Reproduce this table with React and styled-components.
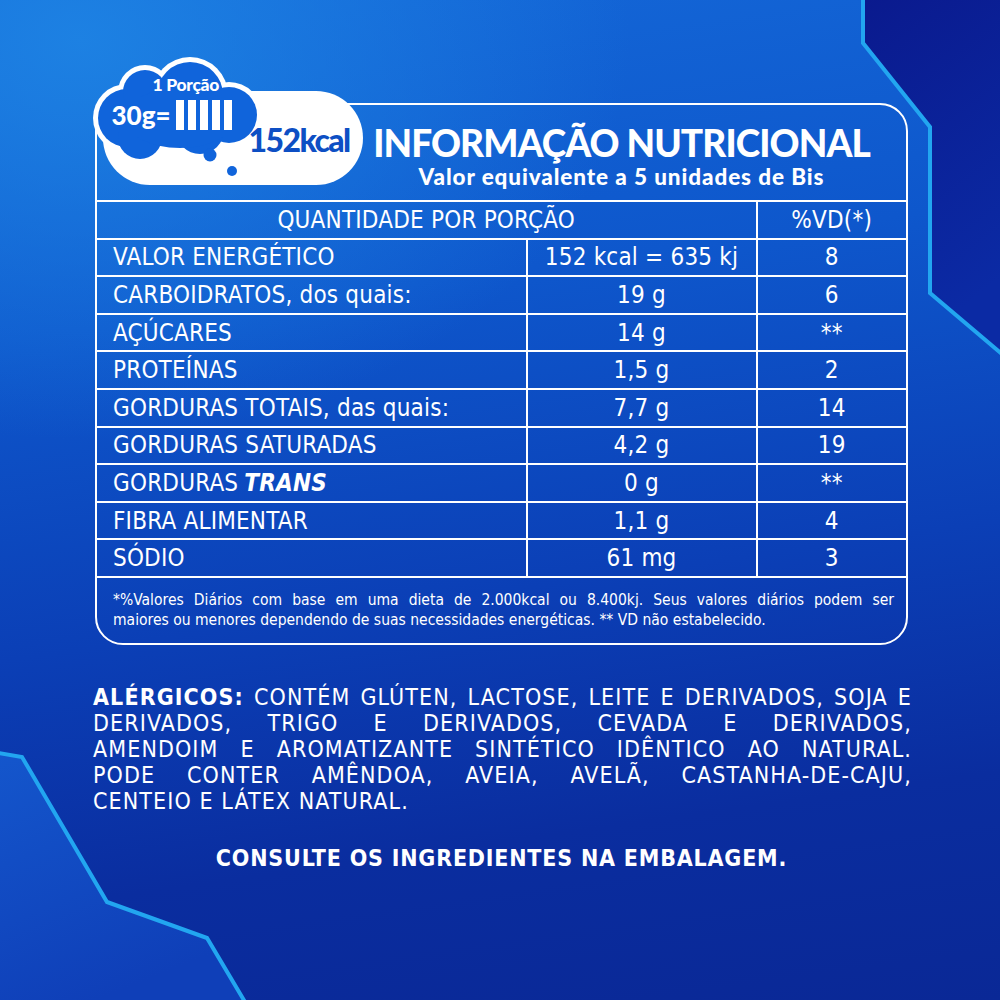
import React from 'react';
import styled, { createGlobalStyle } from 'styled-components';

const GlobalStyle = createGlobalStyle`
  html, body { margin: 0; padding: 0; }
  body { background: #0b3db3; }
`;

const NARROW = `"Liberation Sans Narrow", "DejaVu Sans Condensed", "Roboto", sans-serif`;
const ROUND = `"Lato", "Open Sans", sans-serif`;

const Page = styled.div`
  position: relative;
  width: 1000px;
  height: 1000px;
  overflow: hidden;
  background:
    radial-gradient(ellipse 55% 40% at 8% 4%, rgba(30, 132, 228, 0.9) 0%, rgba(30, 132, 228, 0) 100%),
    linear-gradient(172deg, #1468d8 0%, #0e57cc 30%, #0b3fb6 58%, #0a2d9f 80%, #0a2896 100%);
`;

const Backdrop = styled.svg`
  position: absolute;
  inset: 0;
  width: 1000px;
  height: 1000px;
`;

const Content = styled.div`
  position: relative;
  padding: 103px 92px 0 95px;
`;

const Panel = styled.div`
  position: relative;
  width: 813px;
  box-sizing: border-box;
  border: 2.5px solid #fff;
  border-radius: 28px;
  color: #fff;
`;

const Header = styled.div`
  display: flex;
  flex-direction: column;
  align-items: center;
  padding: 18px 40px 10px 280px;
  height: 95px;
  box-sizing: border-box;
`;

const Title = styled.div`
  font-family: ${ROUND};
  font-weight: 900;
  font-size: 37px;
  line-height: 40px;
  letter-spacing: -0.9px;
  white-space: nowrap;
`;

const Subtitle = styled.div`
  margin-top: 2px;
  font-family: ${ROUND};
  font-weight: 900;
  font-size: 22.5px;
  line-height: 24px;
  letter-spacing: 0.9px;
  white-space: nowrap;
`;

const Row = styled.div`
  display: grid;
  grid-template-columns: ${p => (p.$head ? '658.5px 1fr' : '428.5px 230px 1fr')};
  height: 37.6px;
  box-sizing: border-box;
  border-top: 2px solid #fff;
`;

const Cell = styled.div`
  display: flex;
  align-items: center;
  justify-content: ${p => (p.$left ? 'flex-start' : 'center')};
  padding-left: ${p => (p.$left ? '16px' : '0')};
  border-left: ${p => (p.$first ? 'none' : '2px solid #fff')};
  font-family: ${NARROW};
  font-size: 24px;
  letter-spacing: 0.2px;
  line-height: 1;
  white-space: nowrap;
`;

const Trans = styled.b`
  font-style: italic;
  font-weight: 700;
  margin-left: 6px;
`;

const Note = styled.div`
  border-top: 2px solid #fff;
  padding: 12px 12px 13px 16px;
  font-family: ${NARROW};
  font-size: 15.5px;
  line-height: 20px;
`;

const JustLine = styled.div`
  text-align: ${p => (p.$last ? 'left' : 'justify')};
  text-align-last: ${p => (p.$last ? 'left' : 'justify')};
`;

const Badge = styled.div`
  position: absolute;
  top: -51.5px;
  left: -7.5px;
  width: 280px;
  height: 135px;
`;

const BadgeArt = styled.svg`
  position: absolute;
  inset: 0;
`;

const Portion = styled.span`
  position: absolute;
  left: 63px;
  top: 20px;
  font-family: ${ROUND};
  font-weight: 900;
  font-size: 17.5px;
  line-height: 22px;
  color: #fff;
  letter-spacing: -0.3px;
`;

const Grams = styled.div`
  position: absolute;
  left: 22px;
  top: 46px;
  display: flex;
  align-items: center;
  gap: 5px;
  height: 30px;
  font-family: ${ROUND};
  font-weight: 900;
  font-size: 26px;
  color: #fff;
`;

const Bars = styled.div`
  display: flex;
  gap: 3.5px;
  height: 30px;
`;

const Bar = styled.i`
  display: block;
  width: 8.5px;
  background: #fff;
`;

const Kcal = styled.span`
  position: absolute;
  left: 159px;
  top: 66px;
  font-family: ${ROUND};
  font-weight: 900;
  font-size: 32px;
  line-height: 40px;
  letter-spacing: -1.6px;
  color: #0d4fc4;
`;

const Allergens = styled.div`
  margin: 39px 0 0 -2px;
  width: 819px;
  color: #fff;
  font-family: ${NARROW};
  font-size: 23px;
  line-height: 26px;
  letter-spacing: 1.1px;
`;

const Consult = styled.div`
  margin-top: 31px;
  text-align: center;
  color: #fff;
  font-family: ${NARROW};
  font-weight: 700;
  font-size: 23px;
  line-height: 26px;
  letter-spacing: 0.8px;
`;

const rows = [
  ['VALOR ENERGÉTICO', '152 kcal = 635 kj', '8'],
  ['CARBOIDRATOS, dos quais:', '19 g', '6'],
  ['AÇÚCARES', '14 g', '**'],
  ['PROTEÍNAS', '1,5 g', '2'],
  ['GORDURAS TOTAIS, das quais:', '7,7 g', '14'],
  ['GORDURAS SATURADAS', '4,2 g', '19'],
  ['TRANS', '0 g', '**'],
  ['FIBRA ALIMENTAR', '1,1 g', '4'],
  ['SÓDIO', '61 mg', '3'],
];

// blue cloud bumps: cx, cy, r
const bumps = [
  [37, 64, 29],
  [55, 38, 22],
  [100, 41, 33],
  [139, 61, 28],
  [50, 83, 22],
  [110, 76, 24],
];

function Cloud() {
  const blue = '#1064db';
  return (
    <Badge>
      <BadgeArt width="280" height="135" viewBox="0 0 280 135">
        <rect x="13" y="37" width="260" height="94" rx="47" fill="#fff" />
        {bumps.map(([x, y, r], i) => <circle key={'w' + i} cx={x} cy={y} r={r + 5} fill="#fff" />)}
        <ellipse cx="90" cy="64" rx="60" ry="35" fill="#fff" />
        {bumps.map(([x, y, r], i) => <circle key={'b' + i} cx={x} cy={y} r={r} fill={blue} />)}
        <ellipse cx="90" cy="64" rx="55" ry="30" fill={blue} />
        <circle cx="120" cy="101" r="6.5" fill={blue} />
        <circle cx="142" cy="117" r="5" fill={blue} />
      </BadgeArt>
      <Portion>1 Porção</Portion>
      <Grams>
        30g=
        <Bars>
          {[0, 1, 2, 3, 4].map(i => <Bar key={i} />)}
        </Bars>
      </Grams>
      <Kcal>152kcal</Kcal>
    </Badge>
  );
}

export default function App() {
  return (
    <Page>
      <GlobalStyle />
      <Backdrop viewBox="0 0 1000 1000">
        <defs>
          <linearGradient id="navy" x1="0" y1="0" x2="0.3" y2="1">
            <stop offset="0" stopColor="#0a1a8e" />
            <stop offset="1" stopColor="#0b2aa4" />
          </linearGradient>
          <linearGradient id="lite" x1="0" y1="0" x2="0.4" y2="1">
            <stop offset="0" stopColor="#1456cc" />
            <stop offset="1" stopColor="#0f3fb8" />
          </linearGradient>
        </defs>
        <polygon points="863,0 1000,0 1000,353 930,293 930,127 863,43" fill="url(#navy)" />
        <polygon points="0,753 22,757 107,902 207,938 243,1000 0,1000" fill="url(#lite)" />
        <polyline points="863,-2 863,43 930,127 930,293 1002,354" fill="none" stroke="#22a6f0" strokeWidth="4" />
        <polyline points="-2,753 22,757 107,902 207,938 245,1002" fill="none" stroke="#22a6f0" strokeWidth="4" />
      </Backdrop>
      <Content>
        <Panel>
          <Cloud />
          <Header>
            <Title>INFORMAÇÃO NUTRICIONAL</Title>
            <Subtitle>Valor equivalente a 5 unidades de Bis</Subtitle>
          </Header>
          <Row $head>
            <Cell $first>QUANTIDADE POR PORÇÃO</Cell>
            <Cell>%VD(*)</Cell>
          </Row>
          {rows.map(([name, qty, vd]) => (
            <Row key={name}>
              <Cell $first $left>
                {name === 'TRANS' ? <>GORDURAS<Trans>TRANS</Trans></> : name}
              </Cell>
              <Cell>{qty}</Cell>
              <Cell>{vd}</Cell>
            </Row>
          ))}
          <Note>
            <JustLine>*%Valores Diários com base em uma dieta de 2.000kcal ou 8.400kj. Seus valores diários podem ser</JustLine>
            <JustLine $last>maiores ou menores dependendo de suas necessidades energéticas. ** VD não estabelecido.</JustLine>
          </Note>
        </Panel>
        <Allergens>
          <JustLine><b>ALÉRGICOS:</b> CONTÉM GLÚTEN, LACTOSE, LEITE E DERIVADOS, SOJA E</JustLine>
          <JustLine>DERIVADOS, TRIGO E DERIVADOS, CEVADA E DERIVADOS,</JustLine>
          <JustLine>AMENDOIM E AROMATIZANTE SINTÉTICO IDÊNTICO AO NATURAL.</JustLine>
          <JustLine>PODE CONTER AMÊNDOA, AVEIA, AVELÃ, CASTANHA-DE-CAJU,</JustLine>
          <JustLine $last>CENTEIO E LÁTEX NATURAL.</JustLine>
        </Allergens>
        <Consult>CONSULTE OS INGREDIENTES NA EMBALAGEM.</Consult>
      </Content>
    </Page>
  );
}
